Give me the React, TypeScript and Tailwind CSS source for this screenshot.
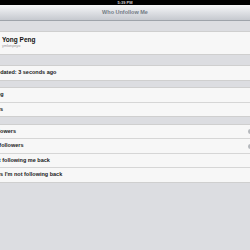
import React from "react";

const font = { fontFamily: '"Liberation Sans", Arial, sans-serif' };

function Row({ text, offset, last, badge }: { text: string; offset: string; last?: boolean; badge?: boolean }) {
  return (
    <div className={`relative h-[13.5px] box-content flex items-center overflow-hidden bg-[#f7f7f7] ${last ? "" : "border-b border-[#d6d6d6]"}`}>
      <span className={`whitespace-nowrap text-[5.5px] font-bold text-[#1a1a1a] leading-none ${offset}`}>{text}</span>
      {badge && <div className="absolute right-[-3px] top-[4.5px] w-[5px] h-[5px] rounded-full bg-[#b5b8bc]" />}
    </div>
  );
}

export default function App() {
  return (
    <div className="w-[250px] h-[250px] overflow-hidden bg-[#dcdde1] flex flex-col" style={font}>
      <div className="h-[5px] shrink-0 bg-black flex items-center justify-center">
        <span className="text-[4px] leading-none font-bold text-[#d0d0d0]">5:39 PM</span>
      </div>
      <div className="h-[16px] shrink-0 bg-gradient-to-b from-[#f6f7f9] to-[#c6c9cf] border-b border-[#9ea3aa] flex items-center justify-center">
        <span className="text-[5.5px] font-bold text-[#737a84] leading-none">Who Unfollow Me</span>
      </div>
      <div className="h-[10px] shrink-0" />
      <div className="h-[24px] shrink-0 bg-[#f7f7f7] border-y border-[#cfcfcf] flex flex-col justify-center items-start pl-[2px]">
        <span className="text-[6.5px] font-bold text-[#111] leading-none">Yong Peng</span>
        <span className="text-[3.8px] text-[#999] leading-none mt-[2px]">ymlonpeyo</span>
      </div>
      <div className="h-[10px] shrink-0" />
      <div className="border-y border-[#cfcfcf] shrink-0">
        <Row text="Last Updated: 3 seconds ago" offset="ml-[-20px]" last />
      </div>
      <div className="h-[6.5px] shrink-0" />
      <div className="border-y border-[#cfcfcf] shrink-0">
        <Row text="Following" offset="ml-[-22px]" />
        <Row text="Followers" offset="ml-[-22.5px]" last />
      </div>
      <div className="h-[6.5px] shrink-0" />
      <div className="border-y border-[#cfcfcf] shrink-0">
        <Row text="New Followers" offset="ml-[-22.5px]" badge />
        <Row text="Unfollowers" offset="ml-[-8px]" badge />
        <Row text="Not following me back" offset="ml-[-8.5px]" />
        <Row text="Followers I'm not following back" offset="ml-[-22.5px]" last />
      </div>
    </div>
  );
}
